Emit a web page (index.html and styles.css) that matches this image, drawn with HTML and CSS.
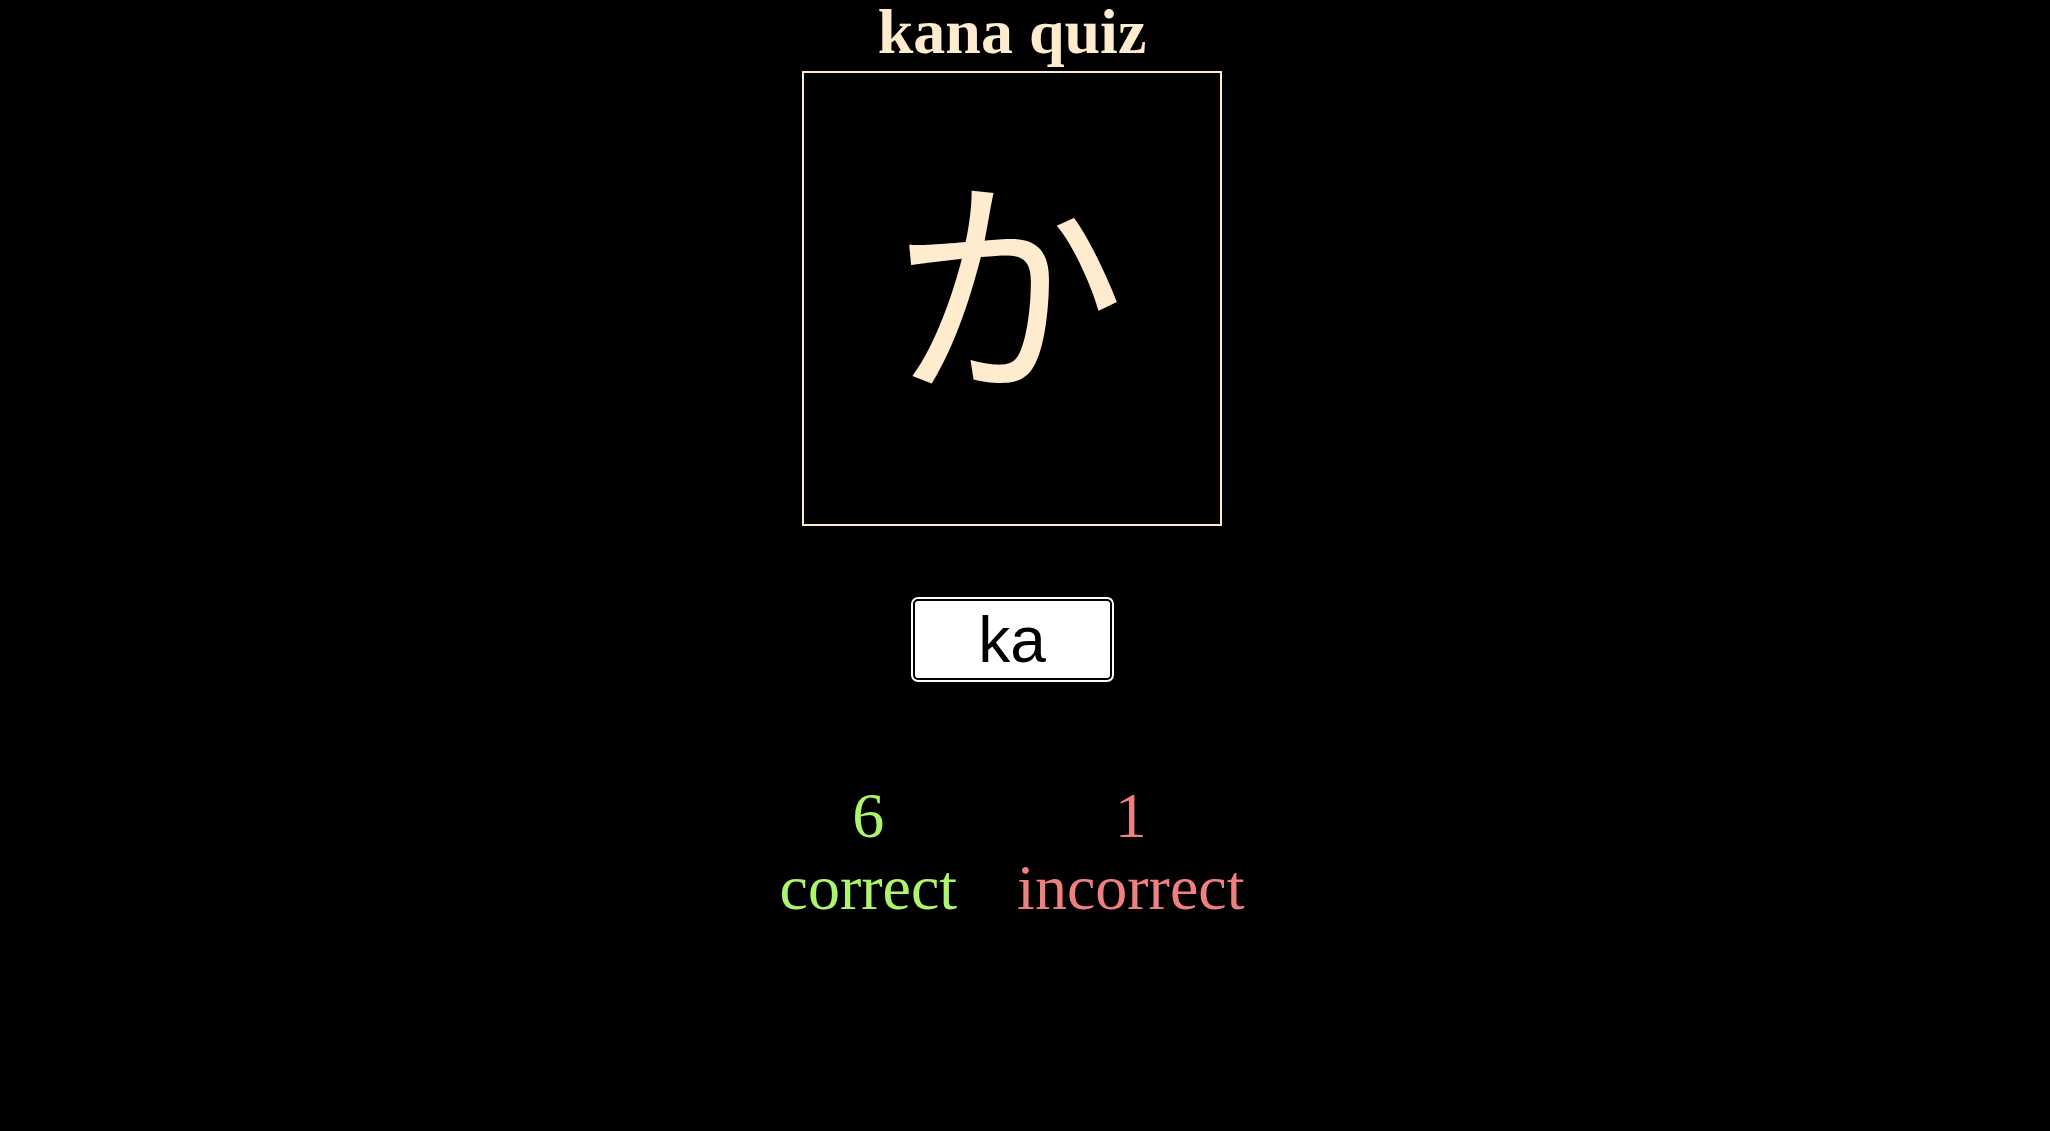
FILE: index.html
```html
<!DOCTYPE html>
<html lang="en">
<head>
<meta charset="utf-8">
<title>kana quiz</title>
<link rel="stylesheet" href="styles.css">
</head>
<body>
<main class="app">
  <h1 class="title">kana quiz</h1>
  <div class="card">
    <span class="kana" lang="ja">か</span>
  </div>
  <input class="answer" id="answer" type="text" value="ka" autofocus>
  <div class="score">
    <div class="stat stat-correct">
      <div class="stat-num">6</div>
      <div class="stat-label">correct</div>
    </div>
    <div class="stat stat-incorrect">
      <div class="stat-num">1</div>
      <div class="stat-label">incorrect</div>
    </div>
  </div>
</main>
<script src="app.js"></script>
</body>
</html>
```
FILE: styles.css
```css
html, body {
  margin: 0;
  padding: 0;
  background: #000;
}

body {
  font-family: "Liberation Serif", "Times New Roman", serif;
  color: #ffebcd;
}

.app {
  width: 2024px;
  display: flex;
  flex-direction: column;
  align-items: center;
}

.title {
  margin: 0;
  font-size: 64px;
  line-height: 64px;
  font-weight: bold;
  color: #ffebcd;
}

.card {
  margin-top: 7px;
  width: 420px;
  height: 455px;
  box-sizing: border-box;
  border: 2px solid #ffebcd;
  display: flex;
  align-items: center;
  justify-content: center;
  padding-bottom: 50px;
  padding-right: 8px;
}

.kana {
  font-family: "Noto Sans CJK JP", sans-serif;
  font-size: 234px;
  line-height: 1;
  color: #ffebcd;
}

.answer {
  margin-top: 73px;
  width: 199px;
  height: 81px;
  box-sizing: border-box;
  border: 2px solid #000;
  border-radius: 5px;
  outline: 2px solid #fff;
  outline-offset: 0;
  background: #fff;
  color: #000;
  caret-color: #000;
  font-family: "Liberation Sans", Arial, sans-serif;
  font-size: 64px;
  text-align: center;
  padding: 0;
}

.answer:focus {
  outline: 2px solid #fff;
}

.score {
  margin-top: 100px;
  display: flex;
  gap: 60px;
  font-size: 64px;
  line-height: 72px;
}

.stat {
  text-align: center;
}

.stat-correct {
  color: #adf56d;
}

.stat-incorrect {
  color: #f08080;
}
```
FILE: app.js
```js
var answer = document.getElementById('answer');
answer.focus();
answer.setSelectionRange(answer.value.length, answer.value.length);
```
